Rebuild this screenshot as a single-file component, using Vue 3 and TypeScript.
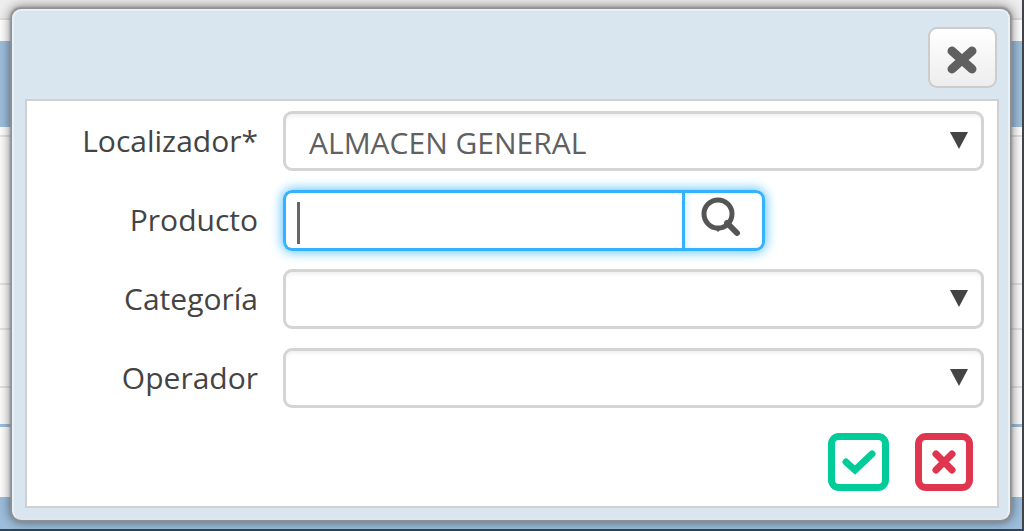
<script setup lang="ts">
import { ref } from 'vue'

interface SelectField {
  id: string
  label: string
  options: string[]
}

const location: SelectField = { id: 'localizador', label: 'Localizador*', options: ['ALMACEN GENERAL'] }
const filters: SelectField[] = [
  { id: 'categoria', label: 'Categoría', options: [''] },
  { id: 'operador', label: 'Operador', options: [''] },
]
const product = ref('')
</script>

<template>
  <div class="page">
    <div class="backdrop" aria-hidden="true">
      <div class="strip top"></div>
      <div class="strip gap"></div>
      <div class="strip bar"></div>
      <div class="strip spacer"></div>
      <div class="strip row tall"></div>
      <div class="strip row"></div>
      <div class="strip row mid"></div>
      <div class="strip row last"></div>
      <div class="strip panel"></div>
      <div class="strip foot"></div>
    </div>

    <section class="dialog" role="dialog" aria-modal="true">
      <header class="head">
        <button class="close" type="button" aria-label="Cerrar">
          <svg viewBox="0 0 30 30" width="30" height="30">
            <path d="M5 6 25 24M25 6 5 24" fill="none" stroke="#606060" stroke-width="9" stroke-linecap="round" />
            <path d="M15 9 21 15 15 21 9 15Z" fill="#606060" />
          </svg>
        </button>
      </header>

      <form class="body" @submit.prevent>
        <div class="field">
          <label :for="location.id">{{ location.label }}</label>
          <div class="select">
            <select :id="location.id">
              <option v-for="o in location.options" :key="o">{{ o }}</option>
            </select>
            <svg class="arrow" viewBox="0 0 18 17" width="18" height="17"><path d="M0 0H18L9 17Z" fill="#444" /></svg>
          </div>
        </div>

        <div class="field">
          <label for="producto">Producto</label>
          <div class="search">
            <div class="entry">
              <input id="producto" v-model="product" type="text" autocomplete="off" />
              <span v-if="!product" class="caret"></span>
            </div>
            <button class="find" type="button" aria-label="Buscar">
              <svg viewBox="0 0 40 40" width="40" height="40">
                <circle cx="17" cy="17" r="14" fill="none" stroke="#555" stroke-width="5" />
                <path d="M26 26 36 36" stroke="#555" stroke-width="6" stroke-linecap="round" />
                <path d="M13 31H21L17 35Z" fill="#555" />
              </svg>
            </button>
          </div>
        </div>

        <div v-for="f in filters" :key="f.id" class="field">
          <label :for="f.id">{{ f.label }}</label>
          <div class="select">
            <select :id="f.id">
              <option v-for="o in f.options" :key="o">{{ o }}</option>
            </select>
            <svg class="arrow" viewBox="0 0 18 17" width="18" height="17"><path d="M0 0H18L9 17Z" fill="#444" /></svg>
          </div>
        </div>

        <div class="actions">
          <button class="action ok" type="submit" aria-label="Aceptar">
            <svg viewBox="0 0 34 26" width="34" height="26">
              <path d="M4 13 13 21 30 5" fill="none" stroke="#00cc99" stroke-width="7" stroke-linecap="round" />
            </svg>
          </button>
          <button class="action cancel" type="button" aria-label="Cancelar">
            <svg viewBox="0 0 26 26" width="26" height="26">
              <path d="M5 5 21 21M21 5 5 21" fill="none" stroke="#e0354f" stroke-width="7" stroke-linecap="round" />
            </svg>
          </button>
        </div>
      </form>
    </section>
  </div>
</template>

<style>
body {
  margin: 0;
}
</style>

<style scoped>
* {
  box-sizing: border-box;
}

.page {
  position: relative;
  display: flex;
  flex-direction: column;
  min-height: 100vh;
  padding: 9px 14px 11px 12px;
  overflow: hidden;
  font-family: 'Open Sans', 'Noto Sans', sans-serif;
  font-size: 30px;
  color: #444;
}

.backdrop {
  position: absolute;
  inset: 0;
  display: flex;
  flex-direction: column;
  border-right: 2px solid #404448;
  border-bottom: 2px solid #36434f;
  background: #fff;
}

.strip {
  flex: none;
}

.top {
  height: 20px;
  border-bottom: 2px solid #e0e0e0;
  background: #eee;
}

.gap {
  height: 21px;
}

.bar {
  height: 86px;
  background: #9dbfdd;
}

.spacer {
  height: 10px;
  border-bottom: 2px solid #e4e4e4;
}

.row {
  height: 45px;
  border-bottom: 2px solid #e4e4e4;
  background: #fcfcfc;
}

.tall {
  height: 148px;
}

.mid {
  height: 58px;
}

.last {
  height: 39px;
  border-bottom: 3px solid #9dbfdd;
}

.panel {
  height: 70px;
}

.foot {
  flex: 1;
  background: #9dbfdd;
}

.dialog {
  position: relative;
  flex: 1;
  display: flex;
  flex-direction: column;
  padding: 0 9px 10px 11px;
  border: 2px solid #e9f1f8;
  border-bottom-color: #dce7ef;
  border-radius: 9px;
  background: #d9e6ef;
  box-shadow: 0 0 2px 2px #909090, 0 0 12px 2px rgba(0, 0, 0, 0.5);
}

.head {
  display: flex;
  justify-content: flex-end;
  padding: 16px 2px 11px;
}

button {
  display: flex;
  align-items: center;
  justify-content: center;
  padding: 0;
  font: inherit;
  cursor: pointer;
}

.close {
  width: 69px;
  height: 61px;
  padding-top: 4px;
  padding-right: 2px;
  border: 2px solid #ccc;
  border-radius: 9px;
  background: linear-gradient(#fff, #ededed);
}

.body {
  flex: 1;
  display: flex;
  flex-direction: column;
  gap: 18px;
  padding: 10px 13px 13px;
  border: 2px solid #d0d0d0;
  background: #fff;
}

.field {
  display: grid;
  grid-template-columns: 218px 1fr;
  column-gap: 25px;
  align-items: start;
  min-height: 61px;
}

label {
  line-height: 60px;
  text-align: right;
}

.select {
  position: relative;
  height: 60px;
}

select {
  width: 100%;
  height: 100%;
  padding: 3px 50px 0 23px;
  border: 3px solid #d4d4d4;
  border-radius: 9px;
  background: #fff;
  box-shadow: inset 0 4px 4px -2px #eee;
  font: inherit;
  color: #606060;
  appearance: none;
}

.arrow {
  position: absolute;
  top: 21px;
  right: 16px;
  pointer-events: none;
}

.search {
  display: flex;
  width: 482px;
  height: 61px;
  border-radius: 9px;
  box-shadow: 0 0 12px 1px #5ac2ff;
}

.entry {
  position: relative;
  flex: 1;
}

#producto {
  width: 100%;
  height: 100%;
  padding: 0 12px;
  border: 3px solid #35b2ff;
  border-right-width: 0;
  border-radius: 9px 0 0 9px;
  background: #fff;
  outline: none;
  font: inherit;
  color: inherit;
}

.caret {
  position: absolute;
  top: 12px;
  left: 14px;
  width: 3px;
  height: 42px;
  background: #666;
  pointer-events: none;
}

#producto:focus + .caret {
  display: none;
}

.find {
  width: 83px;
  padding-right: 5px;
  padding-bottom: 7px;
  border: 3px solid #35b2ff;
  border-radius: 0 9px 9px 0;
  background: #fff;
  box-shadow: inset 4px 0 6px -2px #d8f0ff;
}

.actions {
  display: flex;
  justify-content: flex-end;
  gap: 26px;
  padding: 6px 11px 0 0;
}

.action {
  width: 58px;
  height: 58px;
  border: 7px solid #e0354f;
  border-radius: 11px;
  background: #fff;
}

.ok {
  width: 61px;
  border-color: #00cc99;
}
</style>
